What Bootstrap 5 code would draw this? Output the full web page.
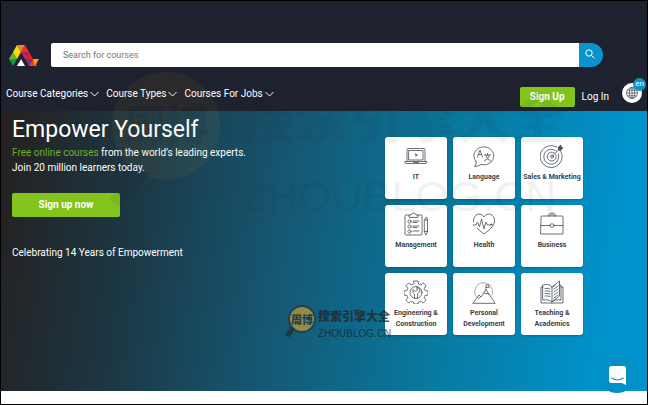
<!DOCTYPE html>
<html lang="en">
<head>
<meta charset="utf-8">
<meta name="viewport" content="width=device-width, initial-scale=1">
<title>Free Online Courses</title>
<link href="https://cdn.jsdelivr.net/npm/bootstrap@5.3.0/dist/css/bootstrap.min.css" rel="stylesheet">
<style>
body{font-family:Roboto,"Liberation Sans",sans-serif;font-size:10px;line-height:15px;border:1px solid #000;background:#fff;color:#fff;min-height:100vh}
.site-head{background:#1d222e;padding:42px 5px 4px}
.search-row{padding:0 39px 0 3px;gap:12px}
.search-row input{height:24px;font-size:9px;padding:0 12px;border:0;border-radius:2px 0 0 2px;color:#444}
.search-row input::placeholder{color:#777}
.search-btn{width:24px;height:24px;background:#0a94ce;border:0;border-radius:0 12px 12px 0;padding:0 3px 2px 0}
.menu{gap:7px;padding-top:7px}
.menu button{background:none;border:0;padding:0;color:#fff;line-height:16px;gap:2px}
.nav-row{padding-top:12px;min-height:38px}
.account{gap:7px}
.green{background:#82c41c;color:#fff;font-weight:700;border:0;border-radius:2px;line-height:16px}
.green:hover{background:#74b016;color:#fff}
.signup{font-size:10px;padding:2px 10px;margin-top:4px;text-align:center}
.login{color:#fff;text-decoration:none;font-size:10px;line-height:20px;margin-top:4px}
.lang{width:20px;height:20px;border:0;border-radius:50%;background:#fff;padding:0;margin-left:6px}
.lang-tag{position:absolute;top:-5px;right:-4px;width:13px;height:13px;line-height:12px;border-radius:50%;background:#0a94ce;color:#fff;font-size:8px;text-align:center}
.hero{background:linear-gradient(98deg,#242223 2%,#1c3642 20%,#155874 44%,#08799f 68%,#0092ca 92%);min-height:280px;padding:0 64px 0 11px}
.pitch h1{font-size:23px;line-height:26px;font-weight:400;margin:6px 0 2px}
.pitch p{margin:0}
.pitch a.free{color:#6fae2b;text-decoration:none}
.now{width:108px;font-size:10px;padding:4px;margin:18px 0 28px;text-align:center}
.topics{display:grid;grid-template-columns:repeat(3,62px);grid-auto-rows:62px;gap:6px;padding-top:26px}
.topic{background:#fff;border-radius:3px;color:#3a414b;font-size:7px;font-weight:700;line-height:11px;padding-top:7px;text-decoration:none;text-align:center;white-space:nowrap;box-shadow:0 1px 2px #00405a66}
.topic svg{margin-bottom:4px;fill:none;stroke:#444c57;stroke-width:.8;stroke-linejoin:round;stroke-linecap:round}
.chat{position:absolute;right:12px;bottom:11px;width:36px;height:36px;border:0;border-radius:50%;background:#058fc7;padding:0}
.wm{position:absolute;pointer-events:none;color:#222;font-family:"Liberation Sans","Noto Sans CJK SC",sans-serif;white-space:nowrap}
.wm-cn{font-family:"Noto Sans CJK SC",sans-serif;font-weight:900}
.wm-big{left:108px;top:68px;opacity:.06;gap:18px}
.wm-big .wm-cn{font-size:54px;line-height:92px}
.wm-big .wm-en{font-size:43px;line-height:43px;margin-top:14px}
.wm-small{left:284px;top:302px;gap:2px;opacity:.72}
.wm-small .wm-cn{font-size:12px;line-height:26px}
.wm-small .wm-en{font-size:10px;line-height:9px}
</style>
<script src="https://cdn.jsdelivr.net/npm/bootstrap@5.3.0/dist/js/bootstrap.bundle.min.js"></script>
</head>
<body class="position-relative">
<header class="site-head">
  <div class="search-row d-flex align-items-center">
    <a href="#" aria-label="Home" class="d-flex flex-shrink-0"><svg width="30" height="21" viewBox="0 0 30 21"><path fill="#72b62b" d="m0 14 4-7 4 7z"/><path fill="#169a48" d="M0 14h8l-4 7z"/><path fill="#f3dc16" d="M4 7 8 0l4 7-4 7z"/><path fill="#f58220" d="M8 0h8l-4 7z"/><path fill="#e6332a" d="m16 0-4 7h8z"/><path fill="#c9163e" d="m12 7 4 7 4-7z"/><path fill="#d9222a" d="m20 7-4 7h8z"/><path fill="#7b2d8e" d="m16 14 4 7 4-7z"/><path fill="#a92a83" d="m12 7 4 7 3-3z"/><path fill="#e9412b" d="m24 14-4 7h8z"/><path fill="#f5a31b" d="M24 14h6l-4 7z"/><path fill="#fff" d="M12 14 8 21h8z"/></svg></a>
    <form class="d-flex flex-grow-1" role="search" onsubmit="return false">
      <input type="search" class="form-control shadow-none" placeholder="Search for courses" aria-label="Search for courses">
      <button class="search-btn d-flex align-items-center justify-content-center flex-shrink-0" aria-label="Search"><svg width="10" height="10" viewBox="0 0 10 10" fill="none" stroke="#fff"><circle cx="4" cy="4" r="3.2"/><path d="m6.3 6.3 3 3"/></svg></button>
    </form>
  </div>
  <div class="nav-row d-flex justify-content-between align-items-start">
    <nav class="menu d-flex" aria-label="Courses">
      <button class="d-flex align-items-center">Course Categories<svg width="9" height="6" viewBox="0 0 9 6" fill="none" stroke="#fff"><path d="m.5 1 4 4 4-4"/></svg></button>
      <button class="d-flex align-items-center">Course Types<svg width="9" height="6" viewBox="0 0 9 6" fill="none" stroke="#fff"><path d="m.5 1 4 4 4-4"/></svg></button>
      <button class="d-flex align-items-center">Courses For Jobs<svg width="9" height="6" viewBox="0 0 9 6" fill="none" stroke="#fff"><path d="m.5 1 4 4 4-4"/></svg></button>
    </nav>
    <div class="account d-flex align-items-start pt-1">
      <button class="green signup">Sign Up</button>
      <a class="login" href="#">Log In</a>
      <button class="lang position-relative d-flex align-items-center justify-content-center" aria-label="Language: en"><svg width="12" height="12" viewBox="0 0 12 12" fill="none" stroke="#3d4450" stroke-width=".7"><circle cx="6" cy="6" r="5.5"/><ellipse cx="6" cy="6" rx="2.7" ry="5.5"/><path d="M6 .5v11M.5 6h11M1.3 3.2h9.4M1.3 8.8h9.4"/></svg><span class="lang-tag">en</span></button>
    </div>
  </div>
</header>
<main class="hero d-flex justify-content-between">
  <section class="pitch">
    <h1>Empower Yourself</h1>
    <p><a href="#" class="free">Free online courses</a> from the world’s leading experts.</p>
    <p>Join 20 million learners today.</p>
    <button class="green now d-block">Sign up now</button>
    <p>Celebrating 14 Years of Empowerment</p>
  </section>
  <nav class="topics" aria-label="Topics">
    <a class="topic" href="#"><svg class="d-block mx-auto" width="24" height="24" viewBox="0 0 24 24"><path d="M3 17V5.5q0-1 1-1h16q1 0 1 1V17M5 6.5h14V16H5zM1 17.5h22l-1 2H2zM9 17.5q0 1 1 1h4q1 0 1-1"/><path fill="#444c57" stroke="none" d="m11 9 3 2.5-1.5.3-.7 1.3z"/></svg>IT</a>
    <a class="topic" href="#"><svg class="d-block mx-auto" width="24" height="24" viewBox="0 0 24 24"><path d="M4 17.5A10 9 0 1 1 9 20.5Q6 22.5 2.500 22.500 5 20 4 17.500z"/><path d="m5.500 13 2.500-7 2.500 7M6.500 10.500h3M12.500 11h6M15.500 9.500V11M17.500 11q-1 4.500-5 6M13.500 11q1.500 4.500 5 6"/></svg>Language</a>
    <a class="topic" href="#"><svg class="d-block mx-auto" width="24" height="24" viewBox="0 0 24 24"><path d="M19.200 5A11 11 0 1 1 17 3.200M16.500 7.300A7.500 7.500 0 1 0 18.300 10M14.500 9A4.500 4.500 0 1 0 16 11"/><circle cx="12" cy="12.500" r="1.500"/><path d="m12 12.500 9-9"/><path fill="#444c57" d="M18.500 5.800V3L21 1v2.500l2 .2-2 2.300z"/></svg>Sales &amp; Marketing</a>
    <a class="topic" href="#"><svg class="d-block mx-auto" width="24" height="24" viewBox="0 0 24 24"><path d="M5 3H2q-1 0-1 1v18q0 1 1 1h15q1 0 1-1V4q0-1-1-1h-3M5 5V3h2q.5-2 2.500-2T12 3h2v2zM9 9h6M9 10.500h4M9 14h6M9 15.500h4M9 19h6M20.500 8l2-3 1 3v12l-1.500 3-1.500-3zM20.500 8h3M20.500 19.500h3"/><circle cx="5.500" cy="9.500" r="1.600"/><circle cx="5.500" cy="14.500" r="1.600"/><circle cx="5.500" cy="19.500" r="1.600"/></svg>Management</a>
    <a class="topic" href="#"><svg class="d-block mx-auto" width="24" height="24" viewBox="0 0 24 24"><path d="M1.500 10C.5 2 9-.5 12 5c3-5.500 11.500-3 10.500 5Q21 16 12 22 8 19 5 16"/><path d="M1 13h3l1.500-3 2 5L9.500 7l2.500 10 2-7 1.500 3h3"/><circle cx="19.200" cy="12.500" r=".7"/></svg>Health</a>
    <a class="topic" href="#"><svg class="d-block mx-auto" width="24" height="24" viewBox="0 0 24 24"><path d="M1 5q0-1 1-1h20q1 0 1 1v17H1zM8 4q1-3 2.500-3h3Q15 1 16 4M10 4q.5-1.500 1-1.500h2q.5 0 1 1.500M1 13.500h9M14 13.500h9"/><ellipse cx="12" cy="13.500" rx="2.200" ry="1.700"/></svg>Business</a>
    <a class="topic" href="#"><svg class="d-block mx-auto" width="24" height="24" viewBox="0 0 24 24"><path d="M10 1h4l.6 3 2.100.9L19.300 3l2.700 2.700-1.800 2.600.9 2.200 2.900.5v4l-2.900.5-.9 2.200L22 20.300 19.300 23l-2.600-1.800-2.100.8-.6 2h-4l-.6-2-2.100-.8L4.700 23 2 20.300l1.800-2.600-.9-2.200L0 15v-4l2.900-.5.9-2.200L2 5.700 4.700 3l2.600 1.900L9.400 4z"/><circle cx="12" cy="12.500" r="6"/><path d="M10.500 18v-3.500Q8 13 9 9.500l2.500 2 2-1.500-1-2.500q3.500 0 3.500 3 0 2-2.500 3V18"/></svg>Engineering &amp;<br>Construction</a>
    <a class="topic" href="#"><svg class="d-block mx-auto" width="24" height="24" viewBox="0 0 24 24"><path stroke="#9299a0" d="M4 16.500A9 9 0 1 1 20 15"/><path d="m1 23 6-8 2 2 5-7.500L23 23zM14 9.500V5h3v2.500h-3M12 12.500l2 1.500 1-1 1.500 1.500M5.500 17l1.500 1.500 1-1"/></svg>Personal<br>Development</a>
    <a class="topic" href="#"><svg class="d-block mx-auto" width="24" height="24" viewBox="0 0 24 24"><path d="M3 5q6-2 9 2v15q-3-3-9-2zM12 7l7.500-6v15L12 22M12 7q1-1 3-1.500M19.500 5H21v15q-6-1-9 2M3 7H1v16h10q1 1 2 0h10V7h-2M5 8.500q3-.5 5 .5M5 11q3-.5 5 .5M5 13.500q3-.5 5 .5M5 16q3-.5 5 .5M14 9l4-3M14 12l4-3M14 15l4-3M14 18l4-3"/></svg>Teaching &amp;<br>Academics</a>
  </nav>
</main>
<div class="wm wm-big d-flex" aria-hidden="true">
  <svg width="114" height="142" viewBox="0 0 40 50"><circle cx="20" cy="20" r="19" fill="#f5a623"/><path d="m8 34-8 12 4 3 10-12z" fill="#222"/><text x="5" y="25" font-size="15" font-weight="900" font-family="Noto Sans CJK SC" fill="#86602a">周博</text></svg>
  <div><div class="wm-cn">搜索引擎大全</div><div class="wm-en">ZHOUBLOG.CN</div></div>
</div>
<div class="wm wm-small d-flex" aria-hidden="true">
  <svg width="31" height="34" viewBox="0 0 31 34"><circle cx="17" cy="16" r="13" fill="#c99b35" stroke="#283843" stroke-width="2"/><path d="m8 25-6 8" stroke="#202b34" stroke-width="5"/><text x="6" y="21" font-size="11" font-weight="900" font-family="Noto Sans CJK SC" fill="#203642">周博</text></svg>
  <div><div class="wm-cn">搜索引擎大全</div><div class="wm-en">ZHOUBLOG.CN</div></div>
</div>
<button class="chat d-flex align-items-center justify-content-center" aria-label="Open chat"><svg width="17" height="19" viewBox="0 0 17 19"><path fill="#fff" d="M2.500 0h12Q17 0 17 2.500V19l-4-2H2.500Q0 17 0 14.500v-12Q0 0 2.500 0z"/><path d="M3 12q5.500 4 11 0" fill="none" stroke="#058fc7" stroke-width="1.200" stroke-linecap="round"/></svg></button>
</body>
</html>
